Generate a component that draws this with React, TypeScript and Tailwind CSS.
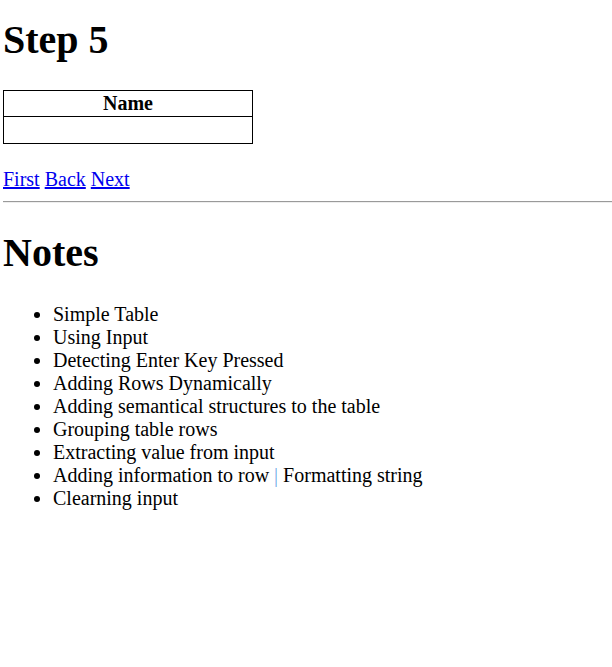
import React from "react";

const notes = [
  "Simple Table",
  "Using Input",
  "Detecting Enter Key Pressed",
  "Adding Rows Dynamically",
  "Adding semantical structures to the table",
  "Grouping table rows",
  "Extracting value from input",
];

export default function App() {
  return (
    <div className="min-h-screen bg-white pl-[3px] font-['Liberation_Serif',serif] text-[20px] leading-[23px] text-black">
      <h1 className="mt-[17px] mb-[27px] text-[40px] leading-[46px] font-bold">Step 5</h1>

      <table className="w-[250px] border-collapse border border-black">
        <thead>
          <tr>
            <th className="border border-black p-px text-center font-bold">Name</th>
          </tr>
        </thead>
        <tbody>
          <tr>
            <td className="h-[27px] border border-black p-px"></td>
          </tr>
        </tbody>
      </table>

      <p className="mt-[24px]">
        <a href="#" className="text-[#0000ee] underline">First</a>{" "}
        <a href="#" className="text-[#0000ee] underline">Back</a>{" "}
        <a href="#" className="text-[#0000ee] underline">Next</a>
      </p>

      <hr className="my-[10px] border-t border-b border-t-[#9a9a9a] border-b-[#eeeeee]" />

      <h1 className="mt-[27px] mb-[27px] text-[40px] leading-[46px] font-bold">Notes</h1>

      <ul className="list-disc pl-[50px]">
        {notes.map((n) => (
          <li key={n}>{n}</li>
        ))}
        <li>
          Adding information to row <span className="text-[#6fa9e6]">|</span> Formatting string
        </li>
        <li>Clearning input</li>
      </ul>
    </div>
  );
}
